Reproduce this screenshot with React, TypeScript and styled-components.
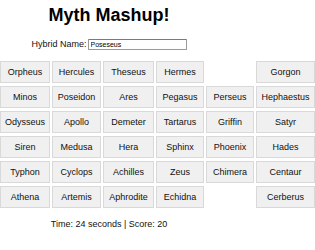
import React from "react";
import styled, { createGlobalStyle } from "styled-components";

const GlobalStyle = createGlobalStyle`
  html, body {
    margin: 0;
    padding: 0;
    background: #ffffff;
    font-family: "Liberation Sans", Arial, sans-serif;
    color: #111111;
  }
`;

const Page = styled.div`
  width: 315px;
`;

const Column = styled.div`
  width: 218px;
  text-align: center;
`;

const Title = styled.h1`
  margin: 0;
  padding-top: 5px;
  font-size: 18px;
  line-height: 21px;
  font-weight: bold;
  color: #000;
`;

const NameRow = styled.div`
  margin-top: 13px;
  height: 11px;
  display: flex;
  align-items: center;
  justify-content: center;
  gap: 1px;
`;

const Label = styled.label`
  font-size: 9px;
  line-height: 11px;
  white-space: nowrap;
`;

const NameInput = styled.input`
  box-sizing: border-box;
  width: 99px;
  height: 11px;
  margin: 0;
  padding: 0 2px;
  border: 1px solid #9a9a9a;
  border-top-color: #7a7a7a;
  border-radius: 1px;
  font-family: "Liberation Sans", Arial, sans-serif;
  font-size: 7px;
  line-height: 9px;
  color: #000;
  background: #fff;
  outline: none;
`;

const Grid = styled.div`
  margin-top: 11px;
  display: grid;
  grid-template-columns: 50px 49px 51px 48px 48px 59px;
  grid-auto-rows: 22px;
  column-gap: 2px;
  row-gap: 3px;
`;

const Tile = styled.button`
  box-sizing: border-box;
  margin: 0;
  padding: 0;
  width: 100%;
  height: 100%;
  border: 1px solid #d9d9d9;
  background: #f0f0f0;
  font-family: "Liberation Sans", Arial, sans-serif;
  font-size: 9px;
  color: #111;
  text-align: center;
  white-space: nowrap;
  cursor: pointer;
`;

const Blank = styled.div``;

const Footer = styled.div`
  margin-top: 11px;
  font-size: 9px;
  line-height: 11px;
`;

const rows: (string | null)[][] = [
  ["Orpheus", "Hercules", "Theseus", "Hermes", null, "Gorgon"],
  ["Minos", "Poseidon", "Ares", "Pegasus", "Perseus", "Hephaestus"],
  ["Odysseus", "Apollo", "Demeter", "Tartarus", "Griffin", "Satyr"],
  ["Siren", "Medusa", "Hera", "Sphinx", "Phoenix", "Hades"],
  ["Typhon", "Cyclops", "Achilles", "Zeus", "Chimera", "Centaur"],
  ["Athena", "Artemis", "Aphrodite", "Echidna", null, "Cerberus"],
];

export default function App() {
  return (
    <Page>
      <GlobalStyle />
      <Column>
        <Title>Myth Mashup!</Title>
        <NameRow>
          <Label htmlFor="hybrid">Hybrid Name:</Label>
          <NameInput id="hybrid" defaultValue="Poseseus" />
        </NameRow>
      </Column>
      <Grid>
        {rows.flatMap((row, r) =>
          row.map((name, c) =>
            name ? <Tile key={`${r}-${c}`}>{name}</Tile> : <Blank key={`${r}-${c}`} />
          )
        )}
      </Grid>
      <Column>
        <Footer>Time: 24 seconds | Score: 20</Footer>
      </Column>
    </Page>
  );
}
